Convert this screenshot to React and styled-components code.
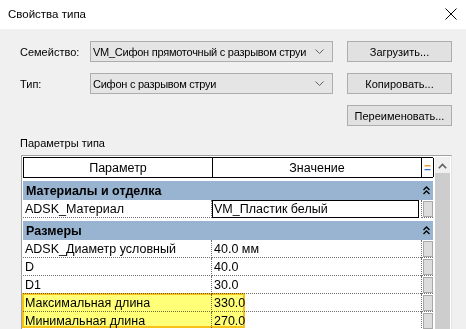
import { styled, createGlobalStyle } from 'styled-components';

const GlobalStyle = createGlobalStyle`
  html, body {
    margin: 0;
    padding: 0;
    width: 466px;
    height: 329px;
    overflow: hidden;
    background: #f0f0f0;
  }
  body {
    font-family: "Liberation Sans", Arial, sans-serif;
    font-size: 11px;
    color: #000;
  }
`;

const params = [
  {
    group: 'Материалы и отделка',
    rows: [{ name: 'ADSK_Материал', value: 'VM_Пластик белый', editing: true }],
  },
  {
    group: 'Размеры',
    rows: [
      { name: 'ADSK_Диаметр условный', value: '40.0 мм' },
      { name: 'D', value: '40.0' },
      { name: 'D1', value: '30.0' },
      { name: 'Максимальная длина', value: '330.0' },
      { name: 'Минимальная длина', value: '270.0' },
    ],
  },
];

export default function App() {
  return (
    <Window>
      <GlobalStyle />
      <TitleBar>
        <Title>Свойства типа</Title>
        <CloseIcon width="12" height="12" viewBox="0 0 12 12">
          <path d="M0.5 0.5 L11.5 11.5 M11.5 0.5 L0.5 11.5" stroke="#000" strokeWidth="1" />
        </CloseIcon>
      </TitleBar>

      <Body>
        <Form>
          <Label>Семейство:</Label>
          <Combo>
            <ComboText>VM_Сифон прямоточный с разрывом струи</ComboText>
            <Chevron />
          </Combo>
          <Button>Загрузить...</Button>

          <Label>Тип:</Label>
          <Combo>
            <ComboText>Сифон с разрывом струи</ComboText>
            <Chevron />
          </Combo>
          <Button>Копировать...</Button>

          <span />
          <span />
          <Button>Переименовать...</Button>
        </Form>

        <SectionLabel>Параметры типа</SectionLabel>

        <GridFrame>
          <Table>
            <HeaderRow>
              <HeadCell>Параметр</HeadCell>
              <HeadCell>Значение</HeadCell>
              <EqCell>
                <EqSign>=</EqSign>
              </EqCell>
            </HeaderRow>

            {params.map((g) => (
              <div key={g.group}>
                <GroupRow>
                  <span>{g.group}</span>
                  <Collapse viewBox="0 0 7 9" width="7" height="9">
                    <path d="M0.5 4 L3.5 1 L6.5 4 M0.5 8 L3.5 5 L6.5 8" stroke="#000" strokeWidth="1.3" fill="none" />
                  </Collapse>
                </GroupRow>
                {g.rows.map((r) => (
                  <Row key={r.name}>
                    <NameCell>{r.name}</NameCell>
                    <ValueCell $editing={r.editing}>{r.value}</ValueCell>
                    <BtnCell>
                      <MiniButton />
                    </BtnCell>
                  </Row>
                ))}
              </div>
            ))}
            <Highlight />
          </Table>

          <Scrollbar>
            <ScrollArrow viewBox="0 0 9 6" width="9" height="6">
              <path d="M0.8 5.2 L4.5 1.5 L8.2 5.2" stroke="#606060" strokeWidth="1.6" fill="none" />
            </ScrollArrow>
            <Thumb />
          </Scrollbar>
        </GridFrame>
      </Body>
    </Window>
  );
}

function Chevron() {
  return (
    <ComboArrow viewBox="0 0 9 5" width="9" height="5">
      <path d="M0.5 0.5 L4.5 4.5 L8.5 0.5" stroke="#606060" strokeWidth="1" fill="none" />
    </ComboArrow>
  );
}

const Window = styled.div`
  width: 466px;
  height: 329px;
  display: flex;
  flex-direction: column;
  overflow: hidden;
`;

const TitleBar = styled.div`
  height: 29px;
  flex-shrink: 0;
  background: #fff;
  display: flex;
  align-items: center;
  justify-content: space-between;
  padding: 0 9px 0 8px;
  box-sizing: border-box;
`;

const Title = styled.span`
  font-size: 11.5px;
  margin-top: -1px;
`;

const CloseIcon = styled.svg`
  margin-top: -1px;
`;

const Body = styled.div`
  flex: 1;
  padding: 12px 14px 0 20px;
  display: flex;
  flex-direction: column;
`;

const Form = styled.div`
  display: grid;
  grid-template-columns: 70px 257px 105px;
  row-gap: 11px;
  grid-auto-rows: 21px;
`;

const Label = styled.div`
  display: flex;
  align-items: center;
`;

const Combo = styled.div`
  display: flex;
  align-items: center;
  justify-content: space-between;
  margin-right: 14px;
  background: #e5e5e5;
  border: 1px solid #adadad;
  box-sizing: border-box;
  padding: 0 8px 0 2px;
  white-space: nowrap;
  overflow: hidden;
`;

const ComboText = styled.span`
  letter-spacing: -0.25px;
`;

const ComboArrow = styled.svg`
  flex-shrink: 0;
`;

const Button = styled.div`
  display: flex;
  align-items: center;
  justify-content: center;
  background: #e1e1e1;
  border: 1px solid #adadad;
  box-sizing: border-box;
`;

const SectionLabel = styled.div`
  margin: 9px 0 4px 0;
  line-height: 16px;
`;

const GridFrame = styled.div`
  margin-left: 1px;
  width: 431px;
  flex: 1;
  border: 1px solid #a0a0a0;
  border-right-color: #e3e3e3;
  border-bottom: none;
  background: #fff;
  box-sizing: border-box;
  padding: 1px 1px 0 1px;
  display: flex;
`;

const Table = styled.div`
  position: relative;
  width: 410px;
  flex-shrink: 0;
  font-size: 12.5px;
`;

const HeaderRow = styled.div`
  display: grid;
  grid-template-columns: 189px 209px 12px;
  height: 21px;
  border: 1px solid #000;
  border-right: none;
  box-sizing: border-box;
`;

const HeadCell = styled.div`
  display: flex;
  align-items: center;
  justify-content: center;
  border-right: 1px solid #000;
`;

const EqCell = styled.div`
  display: flex;
  align-items: center;
  justify-content: center;
  border-right: 1px solid #000;
`;

const EqSign = styled.span`
  font-size: 12px;
  font-weight: 700;
  background: linear-gradient(#e8a040 50%, #3070c0 50%);
  -webkit-background-clip: text;
  background-clip: text;
  color: transparent;
  line-height: 1;
`;

const GroupRow = styled.div`
  height: 19px;
  margin-top: 3px;
  background: #99b4d1;
  display: flex;
  align-items: center;
  justify-content: space-between;
  padding: 0 3px 0 3px;
  font-weight: 700;
`;

const Collapse = styled.svg``;

const Row = styled.div`
  display: grid;
  grid-template-columns: 189px 209px 12px;
  height: 18px;
`;

const NameCell = styled.div`
  display: flex;
  align-items: center;
  padding-left: 2px;
  border-bottom: 1px dotted #707070;
  border-right: 1px dotted #707070;
  white-space: nowrap;
`;

const ValueCell = styled.div`
  display: flex;
  align-items: center;
  padding-left: 2px;
  white-space: nowrap;
  box-sizing: border-box;
  border-bottom: 1px dotted #707070;
  ${(p) =>
    p.$editing &&
    `
    border: 1px solid #000;
    margin-right: 2px;
    padding-left: 1px;
  `}
`;

const BtnCell = styled.div`
  display: flex;
  align-items: center;
  justify-content: flex-start;
  border-bottom: 1px dotted #707070;
  border-left: 1px dotted #707070;
`;

const MiniButton = styled.div`
  width: 8px;
  height: 14px;
  background: #dcdcdc;
  border: 1px solid #a8a8a8;
  margin-left: 1px;
`;

const Highlight = styled.div`
  position: absolute;
  left: -1px;
  top: 136px;
  width: 223px;
  height: 35px;
  border: 2px solid #f6c21a;
  background: #ffff78;
  box-sizing: border-box;
  mix-blend-mode: multiply;
  pointer-events: none;
`;

const Scrollbar = styled.div`
  margin-left: 2px;
  width: 17px;
  display: flex;
  flex-direction: column;
  background: #f0f0f0;
`;

const ScrollArrow = styled.svg`
  margin: 6px auto 4px auto;
  display: block;
`;

const Thumb = styled.div`
  flex: 1;
  background: #cdcdcd;
`;
